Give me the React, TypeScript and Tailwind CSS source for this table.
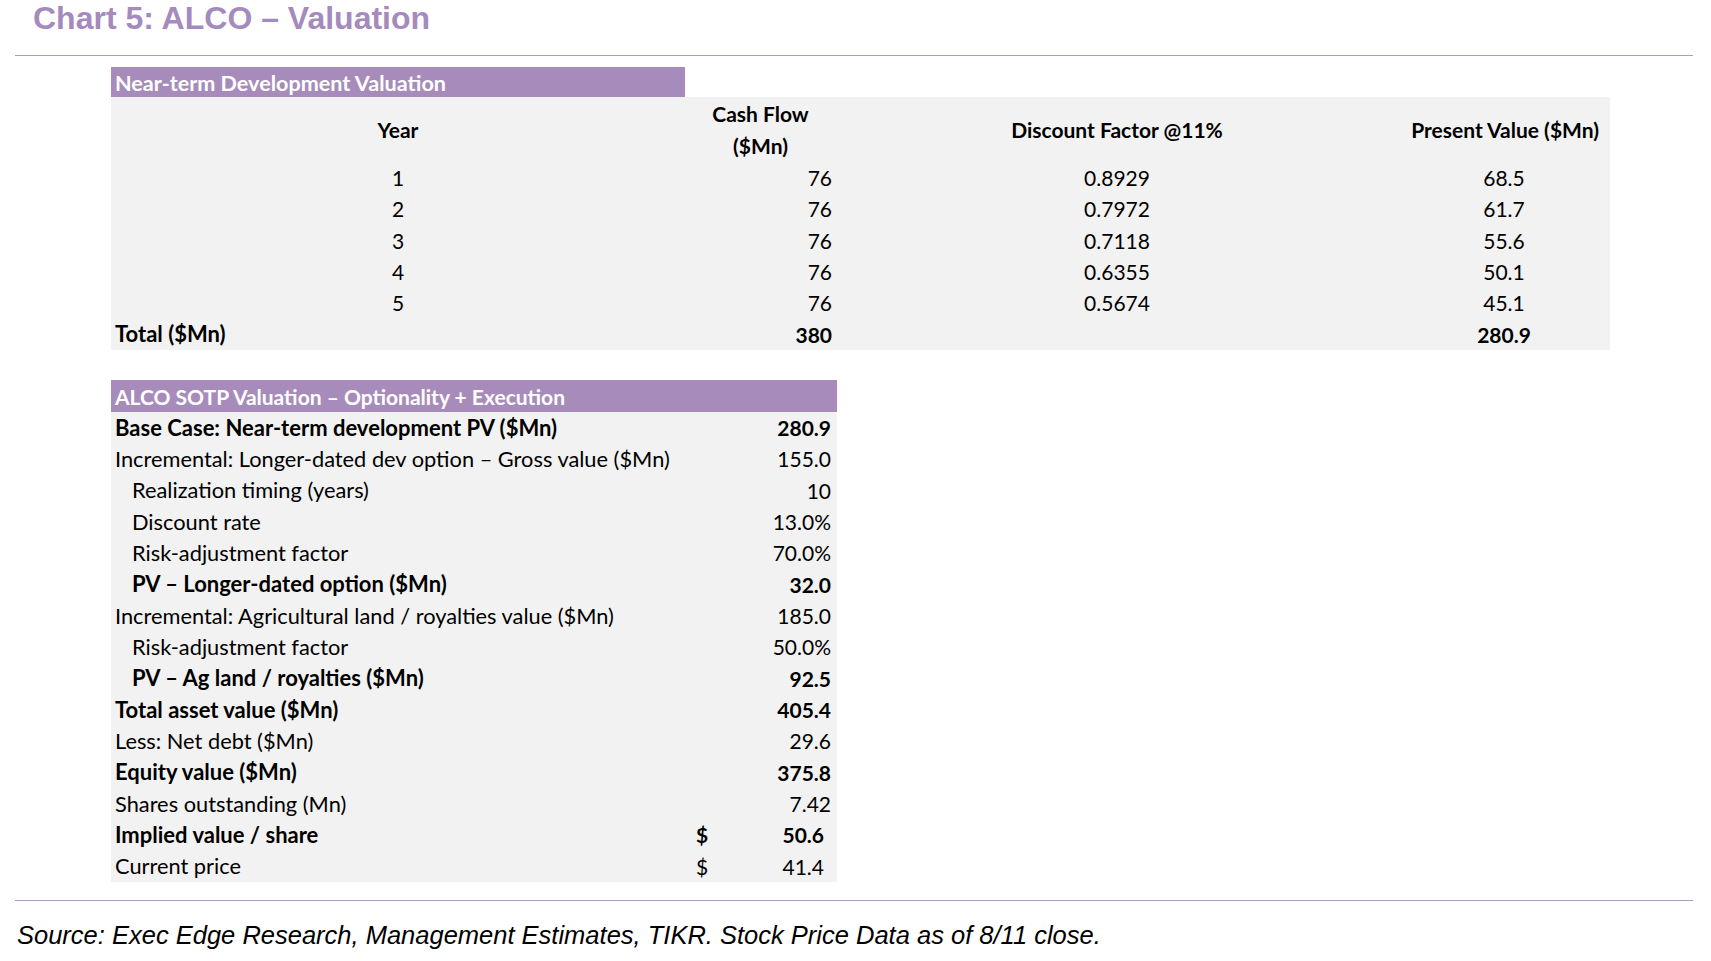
const font = { fontFamily: 'Lato, "Open Sans", sans-serif' };

type Row = { label: string; value: string; bold?: boolean; indent?: boolean; dollar?: boolean };

const years = [
  { year: '1', cash: '76', df: '0.8929', pv: '68.5' },
  { year: '2', cash: '76', df: '0.7972', pv: '61.7' },
  { year: '3', cash: '76', df: '0.7118', pv: '55.6' },
  { year: '4', cash: '76', df: '0.6355', pv: '50.1' },
  { year: '5', cash: '76', df: '0.5674', pv: '45.1' },
];

const sotp: Row[] = [
  { label: 'Base Case: Near-term development PV ($Mn)', value: '280.9', bold: true },
  { label: 'Incremental: Longer-dated dev option – Gross value ($Mn)', value: '155.0' },
  { label: 'Realization timing (years)', value: '10', indent: true },
  { label: 'Discount rate', value: '13.0%', indent: true },
  { label: 'Risk-adjustment factor', value: '70.0%', indent: true },
  { label: 'PV – Longer-dated option ($Mn)', value: '32.0', bold: true, indent: true },
  { label: 'Incremental: Agricultural land / royalties value ($Mn)', value: '185.0' },
  { label: 'Risk-adjustment factor', value: '50.0%', indent: true },
  { label: 'PV – Ag land / royalties ($Mn)', value: '92.5', bold: true, indent: true },
  { label: 'Total asset value ($Mn)', value: '405.4', bold: true },
  { label: 'Less: Net debt ($Mn)', value: '29.6' },
  { label: 'Equity value ($Mn)', value: '375.8', bold: true },
  { label: 'Shares outstanding (Mn)', value: '7.42' },
  { label: 'Implied value / share', value: '50.6', bold: true, dollar: true },
  { label: 'Current price', value: '41.4', dollar: true },
];

export default function App() {
  return (
    <div className="relative h-[961px] w-[1711px] overflow-hidden bg-white text-black">
      {/* title */}
      <div className="h-[55px] pl-[33px] pt-[2px]">
        <h1
          className="text-[32px] font-bold leading-[32px] text-[#a58bbd]"
          style={{ fontFamily: '"Liberation Sans", Arial, sans-serif' }}
        >
          Chart 5: ALCO – Valuation
        </h1>
      </div>
      <div className="ml-[15px] h-px w-[1678px] bg-[#a99bc2]" />

      <div className="ml-[111px] mt-[11px] text-[21px] leading-none" style={font}>
        {/* Near-term development table */}
        <div className="flex h-[30px] w-[574px] items-center whitespace-nowrap bg-[#a78cbb] pl-1 pt-[3px] text-[21.6px] font-bold text-white">
          Near-term Development Valuation
        </div>
        <div className="grid w-[1499px] grid-cols-[574px_151px_562px_212px] bg-[#f2f2f2]">
          <div className="flex h-[65px] items-center justify-center font-bold">Year</div>
          <div className="flex h-[65px] flex-col items-center justify-center font-bold leading-[32px]">
            <span>Cash Flow</span>
            <span>($Mn)</span>
          </div>
          <div className="flex h-[65px] items-center justify-center font-bold">Discount Factor @11%</div>
          <div className="flex h-[65px] items-center justify-end pr-[11px] font-bold">Present Value ($Mn)</div>
          {years.map((r) => (
            <div key={r.year} className="contents">
              <div className="flex h-[31.33px] items-center justify-center">{r.year}</div>
              <div className="flex h-[31.33px] items-center justify-end pr-[4px]">{r.cash}</div>
              <div className="flex h-[31.33px] items-center justify-center">{r.df}</div>
              <div className="flex h-[31.33px] items-center justify-center">{r.pv}</div>
            </div>
          ))}
          <div className="flex h-[31.33px] items-center pl-1 text-[22px] font-bold">Total ($Mn)</div>
          <div className="flex h-[31.33px] items-center justify-end pr-[4px] font-bold">380</div>
          <div />
          <div className="flex h-[31.33px] items-center justify-center font-bold">280.9</div>
        </div>

        {/* SOTP table */}
        <div className="mt-[30px] w-[726px]">
          <div className="flex h-[32px] items-center whitespace-nowrap bg-[#a78cbb] pl-1 pt-[2px] text-[21px] font-bold text-white">
            ALCO SOTP Valuation – Optionality + Execution
          </div>
          <div className="bg-[#f2f2f2]">
            {sotp.map((r, i) => (
              <div key={i} className={`flex h-[31.33px] items-center ${r.bold ? 'font-bold' : ''}`}>
                <span
                  className={`min-w-0 flex-1 whitespace-nowrap ${r.bold ? 'text-[22px]' : 'text-[21.8px]'} ${
                    r.indent ? 'pl-[21px]' : 'pl-1'
                  }`}
                >
                  {r.label}
                </span>
                <span className="w-[60px] shrink-0 text-center">{r.dollar ? '$' : ''}</span>
                <span className={`w-[105px] shrink-0 text-right ${r.dollar ? 'pr-[13px]' : 'pr-[6px]'}`}>
                  {r.value}
                </span>
              </div>
            ))}
          </div>
        </div>
      </div>

      <div className="ml-[15px] mt-[18px] h-px w-[1678px] bg-[#a99bc2]" />
      <p
        className="ml-[17px] mt-[20px] text-[25.5px] italic leading-[28px] text-black"
        style={{ fontFamily: '"Liberation Sans", Arial, sans-serif' }}
      >
        Source: Exec Edge Research, Management Estimates, TIKR. Stock Price Data as of 8/11 close.
      </p>
    </div>
  );
}
